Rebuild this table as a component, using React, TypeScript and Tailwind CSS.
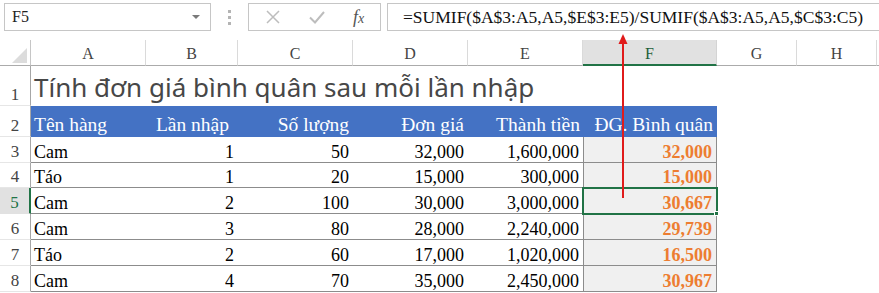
import React from "react";

type Row = [string, string, string, string, string, string];

const data: Row[] = [
  ["Cam", "1", "50", "32,000", "1,600,000", "32,000"],
  ["Táo", "1", "20", "15,000", "300,000", "15,000"],
  ["Cam", "2", "100", "30,000", "3,000,000", "30,667"],
  ["Cam", "3", "80", "28,000", "2,240,000", "29,739"],
  ["Táo", "2", "60", "17,000", "1,020,000", "16,500"],
  ["Cam", "4", "70", "35,000", "2,450,000", "30,967"],
];

const colLetters = ["A", "B", "C", "D", "E", "F", "G", "H"];

function RowHeader({ n, active }: { n: number; active?: boolean }) {
  return (
    <div
      className={
        active
          ? "flex items-end justify-center text-[17px] leading-[20px] bg-[#e1e1e1] text-[#217346] border-b border-[#e1e1e1] border-r-2 border-r-[#217346]"
          : "flex items-end justify-center text-[17px] leading-[20px] text-[#444] border-b border-[#e6e6e6] border-r border-r-[#a6a6a6]"
      }
    >
      {n}
    </div>
  );
}

const hdr =
  "bg-[#4472c4] text-white text-[19.5px] leading-[20px] flex items-end pb-[2px] whitespace-nowrap";
const cell = "flex items-end text-[18px] leading-[20px] border-b border-[#8c8c8c]";

export default function App() {
  return (
    <div className="relative w-[879px] h-[293px] overflow-hidden bg-white text-black font-['Liberation_Serif',serif]">
      {/* Formula bar */}
      <div className="flex items-start h-[40px] pt-[3px]">
        <div className="ml-[4px] w-[207px] h-[28px] border border-[#c6c6c6] flex items-center justify-between pl-[7px] pr-[10px] text-[16px] text-[#222]">
          <span>F5</span>
          <svg width="8" height="4" viewBox="0 0 8 4">
            <path d="M0 0H8L4 4Z" fill="#7a7a7a" />
          </svg>
        </div>
        <div className="w-[37px] h-[28px] flex flex-col items-center justify-center gap-[3px]">
          <div className="w-[3px] h-[3px] bg-[#b4b4b4]" />
          <div className="w-[3px] h-[3px] bg-[#b4b4b4]" />
          <div className="w-[3px] h-[3px] bg-[#b4b4b4]" />
        </div>
        <div className="w-[133px] h-[28px] border border-[#c6c6c6] flex items-center">
          <svg className="ml-[17px]" width="14" height="14" viewBox="0 0 14 14">
            <path d="M1 1L13 13M13 1L1 13" stroke="#bdbdbd" strokeWidth="1.5" fill="none" />
          </svg>
          <svg className="ml-[29px]" width="16" height="14" viewBox="0 0 16 14">
            <path d="M1 7.5L6 12.5L15 2" stroke="#bdbdbd" strokeWidth="2" fill="none" />
          </svg>
          <span className="ml-[28px] italic text-[18px] leading-none text-[#555]">
            f<span className="text-[14px]">x</span>
          </span>
        </div>
        <div className="ml-[6px] flex-1 h-[28px] border border-r-0 border-[#c6c6c6] flex items-center pl-[15px] text-[17.5px] whitespace-nowrap text-[#111]">
          =SUMIF($A$3:A5,A5,$E$3:E5)/SUMIF($A$3:A5,A5,$C$3:C5)
        </div>
      </div>

      {/* Sheet grid */}
      <div className="grid grid-cols-[31px_115px_92px_115px_115px_115px_134px_80px_80px_1fr] grid-rows-[26px_40px_31px_26px_25px_26px_26px_26px_26px]">
        {/* Column headers */}
        <div className="relative border-r border-[#c6c6c6] border-b border-b-[#ababab]">
          <svg className="absolute left-[12px] top-[8px]" width="15" height="15" viewBox="0 0 15 15">
            <path d="M15 0V15H0Z" fill="#dcdcdc" />
          </svg>
        </div>
        {colLetters.map((c) =>
          c === "F" ? (
            <div
              key={c}
              className="flex items-end justify-center text-[16px] leading-[20px] bg-[#e1e1e1] text-[#1e5e3a] border-r border-[#d4d4d4] border-b-2 border-b-[#217346]"
            >
              {c}
            </div>
          ) : (
            <div
              key={c}
              className="flex items-end justify-center pb-[1px] text-[16px] leading-[20px] text-[#444] border-r border-[#dadada] border-b border-b-[#ababab]"
            >
              {c}
            </div>
          )
        )}
        <div className="border-b border-[#ababab]" />

        {/* Row 1: title */}
        <RowHeader n={1} />
        <div className="col-span-9 flex items-end pl-[3px] pb-[4px] whitespace-nowrap font-['Noto_Sans',sans-serif] text-[26px] leading-[30px] text-[#474747]">
          Tính đơn giá bình quân sau mỗi lần nhập
        </div>

        {/* Row 2: header */}
        <RowHeader n={2} />
        <div className={hdr + " pl-[3px]"}>Tên hàng</div>
        <div className={hdr + " justify-end pr-[9px]"}>Lần nhập</div>
        <div className={hdr + " justify-end pr-[4px]"}>Số lượng</div>
        <div className={hdr + " justify-end pr-[4px]"}>Đơn giá</div>
        <div className={hdr + " justify-end pr-[3px]"}>Thành tiền</div>
        <div className={hdr + " justify-end pr-[4px]"}>ĐG. Bình quân</div>
        <div />
        <div />
        <div />

        {/* Data rows */}
        {data.map((r, i) => (
          <React.Fragment key={i}>
            <RowHeader n={i + 3} active={i === 2} />
            <div className={cell + " pl-[3px]"}>{r[0]}</div>
            <div className={cell + " justify-end pr-[4px]"}>{r[1]}</div>
            <div className={cell + " justify-end pr-[4px]"}>{r[2]}</div>
            <div className={cell + " justify-end pr-[4px]"}>{r[3]}</div>
            <div className={cell + " justify-end pr-[4px]"}>{r[4]}</div>
            <div className={cell + " justify-end pr-[4px] font-bold text-[#ed7d31] bg-[#f0f0f0] border-l border-r"}>
              {r[5]}
            </div>
            <div />
            <div />
            <div />
          </React.Fragment>
        ))}
      </div>

      {/* Selection box for F5 */}
      <div className="absolute left-[582px] top-[187px] w-[136px] h-[28px] border-2 border-[#217346]" />
      <div className="absolute left-[714px] top-[211px] w-[5px] h-[5px] bg-[#217346] border border-white" />

      {/* Red arrow */}
      <svg className="absolute left-[615px] top-[32px]" width="16" height="170" viewBox="0 0 16 170">
        <path d="M8 10V166" stroke="#e01b1b" strokeWidth="2" />
        <path d="M8 2L3.5 12H12.5Z" fill="#e01b1b" />
      </svg>
    </div>
  );
}
